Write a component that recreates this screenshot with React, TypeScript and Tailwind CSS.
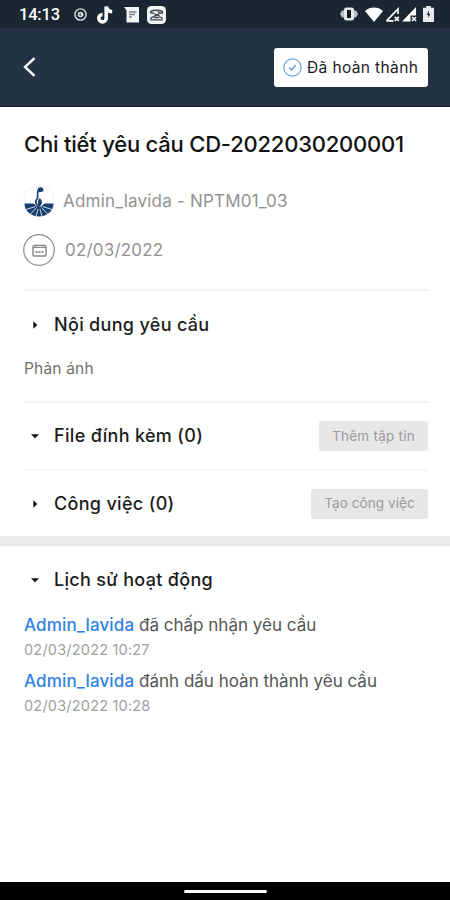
import type { ReactNode } from "react";

const history = [
  { user: "Admin_lavida", action: "đã chấp nhận yêu cầu", time: "02/03/2022 10:27" },
  { user: "Admin_lavida", action: "đánh dấu hoàn thành yêu cầu", time: "02/03/2022 10:28" },
];

const StatusBar = () => (
  <div className="flex h-7 shrink-0 items-center justify-between bg-[#1a2631] pl-[19px] pr-4 text-white">
    <div className="flex items-center pt-px">
      <span className="w-[55px] pt-px font-[Roboto,sans-serif] text-[16.5px] font-medium leading-none tracking-[-0.2px]">14:13</span>
      <svg className="h-[13px] w-[13px]" viewBox="0 0 13 13" fill="none" stroke="#dfe3e6">
        <circle cx="6.5" cy="6.5" r="5.6" strokeWidth="1.4" />
        <circle cx="6.5" cy="6.5" r="2" strokeWidth="1.6" />
        <path d="M6.5 6.5h3" strokeWidth="1.2" />
      </svg>
      <svg className="ml-[10px] h-[18px] w-4" viewBox="0 0 16 18" fill="none" stroke="#fff" strokeWidth="3.6">
        <path d="M9.2 0.5V12.2a3.7 3.7 0 1 1-3.7-3.7" />
        <path d="M9.4 0.8c.3 3 2.5 4.7 5.8 4.9" />
      </svg>
      <svg className="ml-[11px] h-4 w-[15px]" viewBox="0 0 15 16">
        <path d="M0 0h15v15.5H2.5V3.5z" fill="#f4f5f5" />
        <path d="M5 5h7.5M5 7.5h6M5 10h3" stroke="#79828a" strokeWidth="1.3" />
      </svg>
      <svg className="ml-2 h-[18px] w-[19px]" viewBox="0 0 19 18">
        <rect width="19" height="18" rx="4.5" fill="#f4f5f5" />
        <path
          d="M3.5 7V5.6C6 3.8 13 3.8 15.5 5.6V7h-3.200l-1.300-1.500M6.500 7H3.500M6.500 7.500L12.500 9.500M12.500 7.500L4 12v1.800h11V12l-3-1.500M7 11.500h5"
          fill="none"
          stroke="#3f4a54"
          strokeWidth="1.3"
        />
      </svg>
    </div>
    <div className="flex items-center">
      <svg className="h-[14px] w-[18px]" viewBox="0 0 18 14">
        <path d="M0 7l2-3.5h14l2 3.5-2 3.5H2z" fill="#b9bec2" />
        <rect x="4" y="0.5" width="10" height="13" rx="2.5" fill="#e6e8ea" />
        <rect x="7" y="3" width="4" height="8" fill="#111a22" />
      </svg>
      <svg className="ml-[7px] h-[15px] w-[18px]" viewBox="0 0 18 15">
        <path d="M0 4C5-.6 13-.6 18 4L9 15z" fill="#fff" />
      </svg>
      <svg className="ml-0.5 h-[15px] w-[15px]" viewBox="0 0 15 15">
        <path d="M1.5 13.8L13 2v5M1.5 13.8H8.5M9.8 9.8l4 4M13.8 9.8l-4 4" fill="none" stroke="#fff" strokeWidth="1.7" />
      </svg>
      <svg className="ml-0.5 h-[15px] w-[15px]" viewBox="0 0 15 15">
        <path d="M0 14.5L14 0v8.500H8.500v6z" fill="#fff" />
        <path d="M10 10l4 4M14 10l-4 4" stroke="#fff" strokeWidth="1.5" />
      </svg>
      <svg className="ml-[6px] h-4 w-[11px]" viewBox="0 0 11 16">
        <path d="M3.2 0h4.600v1.800H11V16H0V1.800h3.200z" fill="#e9ebec" />
        <path d="M6 4.500L3.500 9h1.700v2.800L7.500 8H6z" fill="#26323d" />
      </svg>
    </div>
  </div>
);

const Header = () => (
  <header className="flex h-[79px] shrink-0 items-center justify-between border-b border-[#121f42] bg-[#233343] px-[22px]">
    <button aria-label="Back">
      <svg className="h-[22px] w-[15px]" viewBox="0 0 15 22" fill="none" stroke="#fff" strokeWidth="2.4">
        <path d="M12.5 2.2L3 11l9.5 8.8" />
      </svg>
    </button>
    <button className="flex h-[39px] w-[154px] items-center rounded-[3px] bg-white pl-[9px] text-[15.5px] text-[#202124]">
      <svg className="mr-[5px] h-[19px] w-[19px] shrink-0" viewBox="0 0 19 19" fill="none" stroke="#6f9fea">
        <circle cx="9.5" cy="9.5" r="8.7" strokeWidth="1.2" />
        <path d="M6.2 9.6l2.400 2.400L12.600 7" strokeWidth="1.6" />
      </svg>
      <span className="whitespace-nowrap pt-px tracking-[0.38px]">Đã hoàn thành</span>
    </button>
  </header>
);

const Avatar = () => (
  <svg className="h-8 w-8" viewBox="0 0 32 32">
    <circle cx="16" cy="16" r="15.3" fill="#fff" stroke="#ececec" strokeWidth="0.8" />
    <path d="M1.500 18.500h9l3.500 3h4l3.500-3h9C30.500 26 24 31.500 16 31.500S1.500 26 1.500 18.500z" fill="#173f70" />
    <path
      d="M12.500 21.500L3 24.500M13.500 22.500L7.500 29M15 24l-2 7.500M17 24l2 7.500M18.500 22.500l6 6.500M19.500 21.500l9.500 3"
      stroke="#fff"
      strokeWidth="0.8"
    />
    <path
      d="M15.600 21.500c-3.200-2.200-3.600-5-1.500-7.800 1.200-1.700.2-3.500.6-6.200.3-3 1.500-4.300 3-4.300 1.600 0 2.300 1.400 1.700 3.200"
      fill="none"
      stroke="#173f70"
      strokeWidth="1.7"
    />
    <path d="M15.500 3.500h4l-.5 3.300-3 .5zM16.500 13c3.500 2.800 3.200 6.500-.6 9-1.700-2.500-1.500-6 .6-9z" fill="#173f70" />
  </svg>
);

const CalendarIcon = () => (
  <svg className="h-8 w-8" viewBox="0 0 32 32" fill="none" stroke="#8c8c8c">
    <circle cx="16" cy="16" r="15.3" strokeWidth="1.2" />
    <rect x="10" y="11.5" width="13" height="10.5" rx="1.8" strokeWidth="1.5" />
    <path d="M10 13.5h13M13 10.500v2M20 10.500v2" strokeWidth="1.2" />
    <path d="M12.5 18h8" strokeWidth="1.8" strokeDasharray="2 1" />
  </svg>
);

const SectionTitle = ({ open, children }: { open?: boolean; children: ReactNode }) => (
  <div className="flex items-center">
    <svg className="ml-[6px] mr-[14px] h-[10px] w-[10px] shrink-0" viewBox="0 0 10 10" fill="#111">
      {open ? <path d="M1 3.300h8L5 7.300z" /> : <path d="M3.300 1.200v7.600l4-3.800z" />}
    </svg>
    <h2 className="whitespace-nowrap text-[18px] font-medium leading-[26px] tracking-[0.32px] text-[#1c1c1c]">{children}</h2>
  </div>
);

export default function App() {
  return (
    <div className="flex h-screen w-full flex-col overflow-hidden bg-white font-[Inter,sans-serif]">
      <StatusBar />
      <Header />

      <main className="flex-1">
        <div className="pl-6 pr-[22px]">
          <h1 className="flex h-[74px] items-center whitespace-nowrap text-[22px] font-medium tracking-[-0.21px] text-[#121212]">
            Chi tiết yêu cầu CD-2022030200001
          </h1>
          <div className="-ml-px mt-1 flex h-8 items-center gap-2 text-[17px] tracking-[0.2px] text-[#929292]">
            <Avatar />
            <span className="pt-0.5">Admin_lavida - NPTM01_03</span>
          </div>
          <div className="-ml-px mt-[17px] flex h-8 items-center gap-[10px] text-[17px] tracking-[0.2px] text-[#929292]">
            <CalendarIcon />
            <span className="pt-0.5">02/03/2022</span>
          </div>

          <section className="mt-[23px] h-[112px] border-t-2 border-[#f4f4f4] pt-[21px]">
            <SectionTitle>Nội dung yêu cầu</SectionTitle>
            <p className="mt-[19px] text-[15.5px] leading-6 tracking-[0.18px] text-[#727272]">Phản ánh</p>
          </section>

          <section className="flex h-[68px] items-center justify-between border-t-2 border-[#f4f4f4]">
            <SectionTitle open>File đính kèm (0)</SectionTitle>
            <button className="h-[30px] w-[109px] whitespace-nowrap rounded-[3px] bg-[#e7e7e7] text-[13.5px] tracking-[0.25px] text-[#9b9b9b]">
              Thêm tập tin
            </button>
          </section>

          <section className="flex h-[67px] items-center justify-between border-t-2 border-[#f7f7f7]">
            <SectionTitle>Công việc (0)</SectionTitle>
            <button className="h-[30px] w-[117px] whitespace-nowrap rounded-[3px] bg-[#e7e7e7] text-[13.5px] tracking-[0.08px] text-[#9b9b9b]">
              Tạo công việc
            </button>
          </section>
        </div>

        <div className="h-[10px] bg-[#ebebeb]" />

        <section className="px-6 pt-[21px]">
          <SectionTitle open>Lịch sử hoạt động</SectionTitle>
          <ul className="mt-[19px]">
            {history.map((item) => (
              <li key={item.time} className="h-14 whitespace-nowrap">
                <p className="text-[17px] leading-[26px] text-[#555]">
                  <span className="font-medium tracking-[0.16px] text-[#2f82e4]">{item.user}</span> {item.action}
                </p>
                <p className="text-[14.5px] leading-6 tracking-[0.2px] text-[#a0a0a0]">{item.time}</p>
              </li>
            ))}
          </ul>
        </section>
      </main>

      <footer className="flex h-[18px] shrink-0 justify-center bg-black pt-2">
        <div className="h-[3px] w-[83px] rounded-full bg-white" />
      </footer>
    </div>
  );
}
